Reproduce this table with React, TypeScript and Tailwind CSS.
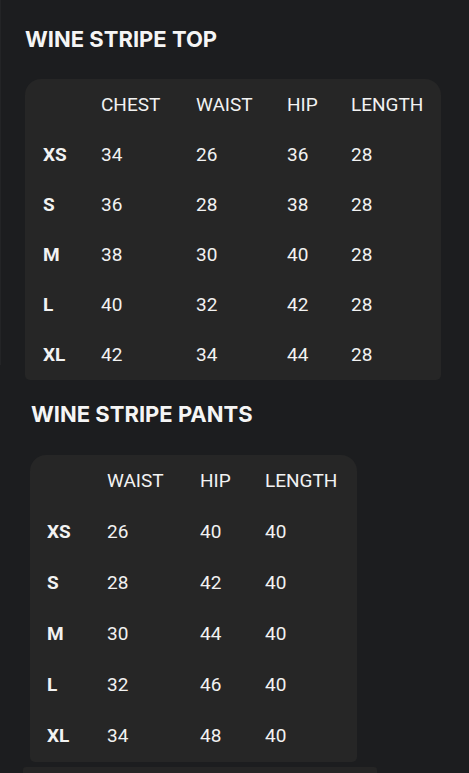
type Chart = {
  title: string;
  cols: string[];
  rows: [string, ...number[]][];
};

const TOP: Chart = {
  title: "WINE STRIPE TOP",
  cols: ["CHEST", "WAIST", "HIP", "LENGTH"],
  rows: [
    ["XS", 34, 26, 36, 28],
    ["S", 36, 28, 38, 28],
    ["M", 38, 30, 40, 28],
    ["L", 40, 32, 42, 28],
    ["XL", 42, 34, 44, 28],
  ],
};

const PANTS: Chart = {
  title: "WINE STRIPE PANTS",
  cols: ["WAIST", "HIP", "LENGTH"],
  rows: [
    ["XS", 26, 40, 40],
    ["S", 28, 42, 40],
    ["M", 30, 44, 40],
    ["L", 32, 46, 40],
    ["XL", 34, 48, 40],
  ],
};

function SizeTable({ chart, grid, rowH }: { chart: Chart; grid: string; rowH: string }) {
  return (
    <div className="font-['Roboto',sans-serif] text-[19px] text-[#f2f2f2]">
      <div className={`grid ${grid} ${rowH} items-center`}>
        <span />
        {chart.cols.map((c) => (
          <span key={c}>{c}</span>
        ))}
      </div>
      {chart.rows.map(([size, ...vals]) => (
        <div key={size} className={`grid ${grid} ${rowH} items-center`}>
          <span className="font-bold">{size}</span>
          {vals.map((v, i) => (
            <span key={i}>{v}</span>
          ))}
        </div>
      ))}
    </div>
  );
}

export default function App() {
  return (
    <div className="relative min-h-[773px] w-full overflow-hidden bg-[#1c1d1f] font-['Inter',sans-serif]">
      {/* faint edge line */}
      <div className="absolute left-0 top-0 h-[365px] w-px bg-[#232426]" />

      <section className="pl-[25px] pt-[25px]">
        <h2 className="text-[22px] font-bold leading-[28px] text-[#f5f5f5]">
          {TOP.title}
        </h2>
        <div className="mt-[26px] h-[301px] w-[416px] rounded-t-2xl rounded-b-[5px] bg-[#262626] pl-[18px] pt-px">
          <SizeTable
            chart={TOP}
            grid="grid-cols-[58px_95px_91px_64px_1fr]"
            rowH="h-[50px]"
          />
        </div>
      </section>

      <section className="pl-[30px] pt-[20px]">
        <h2 className="pl-px text-[22px] font-bold leading-[28px] text-[#f5f5f5]">
          {PANTS.title}
        </h2>
        <div className="mt-[27px] h-[307px] w-[327px] rounded-t-2xl rounded-b-[5px] bg-[#262626] pl-[17px] pt-px">
          <SizeTable
            chart={PANTS}
            grid="grid-cols-[60px_93px_65px_1fr]"
            rowH="h-[51px]"
          />
        </div>
      </section>

      {/* next card peeking in */}
      <div className="ml-[23px] mt-[5px] h-[20px] w-[354px] rounded-t-[3px] bg-[#252525]" />
    </div>
  );
}
